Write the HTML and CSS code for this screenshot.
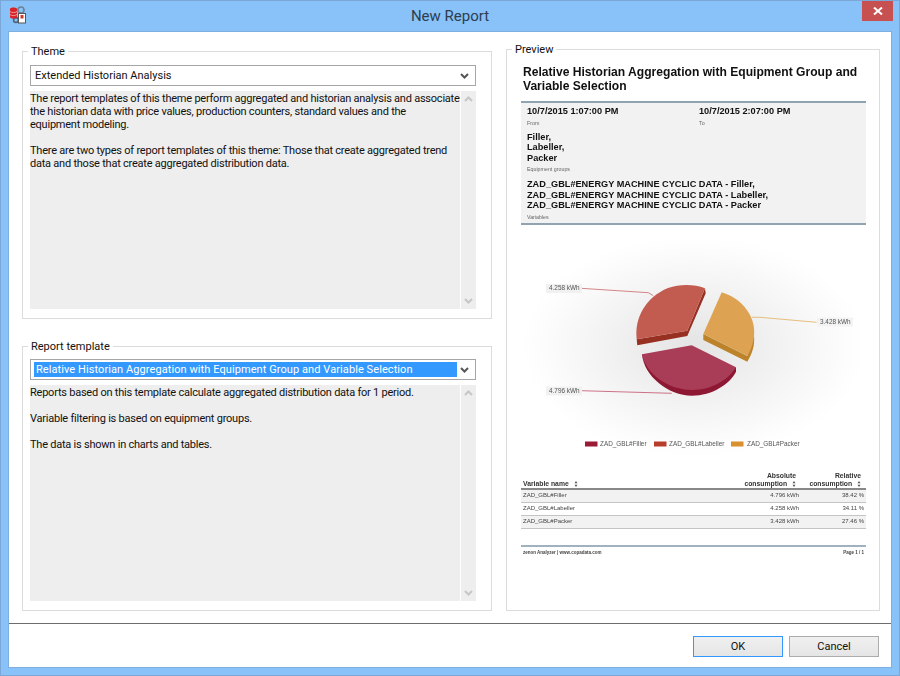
FILE: index.html
```html
<!DOCTYPE html>
<html lang="en">
<head>
<meta charset="UTF-8" />
<title>New Report</title>
<link rel="stylesheet" href="styles.css">
</head>
<body>

<svg class="defs" width="0" height="0">
  <symbol id="sort" viewBox="0 0 5 8">
    <path d="M2.5 0 L4.5 3 H0.5 Z M0.5 5 H4.5 L2.5 8 Z" fill="#555" />
  </symbol>
  <symbol id="chev-down" viewBox="0 0 9 6">
    <path d="M1 1 L4.5 4.5 L8 1" fill="none" stroke="currentColor" stroke-width="2" />
  </symbol>
  <symbol id="chev-up" viewBox="0 0 9 6">
    <path d="M1 5 L4.5 1.5 L8 5" fill="none" stroke="currentColor" stroke-width="2" />
  </symbol>
</svg>

<div class="window">
  <div class="titlebar">
    <svg class="app-icon" width="18" height="18" viewBox="0 0 18 18">
      <circle cx="12" cy="4" r="3" fill="none" stroke="#6d8294" stroke-width="1.6" />
      <circle cx="7" cy="14" r="2.4" fill="none" stroke="#4d6478" stroke-width="1.6" />
      <path d="M1 3 C1 1 8 1 8 3 V11 C8 13 1 13 1 11 Z" fill="#d8232a" />
      <path d="M1 5.5 C3 7 6 7 8 5.5 M1 8.5 C3 10 6 10 8 8.5" fill="none" stroke="#f6b0b0" stroke-width="0.8" />
      <rect x="9.5" y="7.5" width="7" height="9.5" fill="#fff" stroke="#555" />
      <rect x="11.5" y="9" width="3" height="3.5" fill="#d03a30" />
    </svg>
    <span class="title">New Report</span>
    <div class="close">
      <svg width="10" height="8" viewBox="0 0 10 8"><path d="M1 0.5 L9 7.5 M9 0.5 L1 7.5" stroke="#fff" stroke-width="2" /></svg>
    </div>
  </div>

  <div class="client">
    <div class="panes">
      <div class="left">
        <fieldset class="group theme-group">
          <legend>Theme</legend>
          <div class="combo">
            <span class="combo-text">Extended Historian Analysis</span>
            <svg class="combo-arrow"><use href="#chev-down" /></svg>
          </div>
          <div class="desc">
            <div class="desc-text">
              <p>The report templates of this theme perform aggregated and historian analysis and associate<br>the historian data with price values, production counters, standard values and the<br>equipment modeling.</p>
              <p>There are two types of report templates of this theme: Those that create aggregated trend<br>data and those that create aggregated distribution data.</p>
            </div>
            <div class="scrollbar">
              <svg><use href="#chev-up" /></svg>
              <svg><use href="#chev-down" /></svg>
            </div>
          </div>
        </fieldset>

        <fieldset class="group template-group">
          <legend>Report template</legend>
          <div class="combo">
            <span class="combo-text selected">Relative Historian Aggregation with Equipment Group and Variable Selection</span>
            <svg class="combo-arrow"><use href="#chev-down" /></svg>
          </div>
          <div class="desc">
            <div class="desc-text">
              <p>Reports based on this template calculate aggregated distribution data for 1 period.</p>
              <p>Variable filtering is based on equipment groups.</p>
              <p>The data is shown in charts and tables.</p>
            </div>
            <div class="scrollbar">
              <svg><use href="#chev-up" /></svg>
              <svg><use href="#chev-down" /></svg>
            </div>
          </div>
        </fieldset>
      </div>

      <fieldset class="group preview-group">
        <legend>Preview</legend>
        <div class="report">
          <h1>Relative Historian Aggregation with Equipment Group and Variable Selection</h1>

          <div class="meta">
            <div class="meta-row">
              <div class="meta-col">
                <strong>10/7/2015 1:07:00 PM</strong>
                <small>From</small>
              </div>
              <div class="meta-col">
                <strong>10/7/2015 2:07:00 PM</strong>
                <small>To</small>
              </div>
            </div>
            <div class="meta-block">
              <strong>Filler,<br>Labeller,<br>Packer</strong>
              <small>Equipment groups</small>
            </div>
            <div class="meta-block">
              <strong>ZAD_GBL#ENERGY MACHINE CYCLIC DATA - Filler,<br>ZAD_GBL#ENERGY MACHINE CYCLIC DATA - Labeller,<br>ZAD_GBL#ENERGY MACHINE CYCLIC DATA - Packer</strong>
              <small>Variables</small>
            </div>
          </div>

          <svg class="chart" width="345" height="222" viewBox="521 240 345 222">
            <defs>
              <radialGradient id="glow" cx="50%" cy="48%" r="50%">
                <stop offset="0" stop-color="#e4e4e4" />
                <stop offset="0.5" stop-color="#f2f2f2" />
                <stop offset="0.9" stop-color="#fdfdfd" />
                <stop offset="1" stop-color="#fff" />
              </radialGradient>
            </defs>
            <rect x="521" y="240" width="345" height="222" fill="url(#glow)" />

            <!-- leader lines -->
            <path d="M581 288.3 L648.3 292.7 L653.3 295.7" fill="none" stroke="#c9686a" stroke-width="0.8" />
            <path d="M751.7 317.3 H760 L816.7 322.3" fill="none" stroke="#e2b060" stroke-width="0.8" />
            <path d="M581 390.7 L671.7 393.3" fill="none" stroke="#c2506c" stroke-width="0.8" />

            <!-- labeller -->
            <path d="M636.7 339.3 L637.3 345.3 L687.3 336 L705.7 293.3 L705 288.3 L687.3 330.7 Z" fill="#983022" />
            <path d="M636.7 339.3 C634 318 646 297 668 288 C680 284 694 284 705 288.3 L687.3 330.7 Z" fill="#c35c50" />
            <!-- packer -->
            <path d="M703.3 334 V340 L747.3 361.7 C752 354 755 346 754 335 L747.3 356 Z" fill="#bd832a" />
            <path d="M721.7 292.3 C740 298 752 312 754 328 C755 338 752 348 747.3 356 L703.3 334 Z" fill="#dda352" />
            <!-- filler -->
            <path d="M642 354.3 C644 376 668 395.7 692 395.7 C712 395.7 730 384 736 371.7 V367.3 L692 380 Z" fill="#8e1733" />
            <path d="M691.7 345.3 L642 354.3 C646 374 668 390 692 390 C712 390 728 380 736 367.3 Z" fill="#a93c56" />

            <!-- value labels -->
            <rect x="546" y="284" width="36" height="9" fill="#f1f1f1" />
            <rect x="817" y="317.500" width="36" height="9" fill="#f3f3f3" />
            <rect x="546" y="386.500" width="36" height="9" fill="#f1f1f1" />
            <text class="chart-text" x="549" y="290.300">4.258 kWh</text>
            <text class="chart-text" x="820" y="324.300">3.428 kWh</text>
            <text class="chart-text" x="549" y="393">4.796 kWh</text>

            <!-- legend -->
            <rect x="585" y="441.500" width="12.500" height="5" fill="#9b1b36" />
            <text class="chart-text" x="600" y="446">ZAD_GBL#Filler</text>
            <rect x="654" y="441.500" width="12.500" height="5" fill="#b73d2c" />
            <text class="chart-text" x="669" y="446">ZAD_GBL#Labeller</text>
            <rect x="731" y="441.500" width="12.500" height="5" fill="#d9902f" />
            <text class="chart-text" x="747" y="446">ZAD_GBL#Packer</text>
          </svg>

          <table class="data">
            <thead>
              <tr>
                <th class="name-col">Variable name <svg class="sort"><use href="#sort" /></svg></th>
                <th>Absolute<br>consumption <svg class="sort"><use href="#sort" /></svg></th>
                <th>Relative<br>consumption <svg class="sort"><use href="#sort" /></svg></th>
              </tr>
            </thead>
            <tbody>
              <tr><td class="name-col">ZAD_GBL#Filler</td><td class="abs-col">4.796 kWh</td><td>38.42 %</td></tr>
              <tr><td class="name-col">ZAD_GBL#Labeller</td><td class="abs-col">4.258 kWh</td><td>34.11 %</td></tr>
              <tr><td class="name-col">ZAD_GBL#Packer</td><td class="abs-col">3.428 kWh</td><td>27.46 %</td></tr>
            </tbody>
          </table>

          <div class="report-footer">
            <span>zenon Analyzer | www.copadata.com</span>
            <span>Page 1 / 1</span>
          </div>
        </div>
      </fieldset>
    </div>

    <div class="buttons">
      <button class="btn btn-default">OK</button>
      <button class="btn">Cancel</button>
    </div>
  </div>
</div>

</body>
</html>
```

FILE: styles.css
```css
* {
  box-sizing: border-box;
}
html,
body {
  margin: 0;
  height: 100%;
}
body {
  font-family: Roboto, sans-serif;
  font-size: 11px;
  color: #111;
  overflow: hidden;
}
.defs {
  position: absolute;
}
.window {
  width: 900px;
  height: 676px;
  display: flex;
  flex-direction: column;
  background-color: #88c2f8;
  border: 1px solid #7aa7d6;
  padding: 0 7px 7px;
}
.titlebar {
  height: 30px;
  flex: none;
  display: flex;
  align-items: center;
  justify-content: center;
}
.app-icon {
  position: absolute;
  left: 9px;
  top: 6px;
}
.title {
  font-size: 15px;
  color: #2c3e50;
}
.close {
  position: absolute;
  left: 862px;
  top: 1px;
  width: 31px;
  height: 20px;
  background-color: #c75050;
  display: flex;
  align-items: center;
  justify-content: center;
}
.client {
  flex: 1;
  display: flex;
  flex-direction: column;
  background-color: #fff;
  border: 1px solid #7fafdf;
}
.panes {
  height: 592px;
  flex: none;
  display: flex;
  gap: 14px;
  padding: 11px 12px 0 13px;
  border-bottom: 1px solid #6d6d6d;
}
.left {
  width: 470px;
  flex: none;
  display: flex;
  flex-direction: column;
  height: 568px;
  gap: 19px;
}
.group {
  margin: 0;
  border: 1px solid #dcdcdc;
  padding: 6px 15px 9px 7px;
  min-width: 0;
}
.group legend {
  margin-left: -2px;
  padding: 0 3px;
  line-height: 18px;
  height: 16px;
}
.theme-group {
  height: 276px;
}
.template-group {
  height: 274px;
  padding-top: 5px;
}
.combo {
  height: 21px;
  border: 1px solid #a6a6a6;
  display: flex;
  align-items: center;
  justify-content: space-between;
  padding: 0 6px 0 3px;
}
.combo-text {
  padding: 0 0 0 1px;
  line-height: 15px;
}
.combo-text.selected {
  width: 423px;
  background-color: #3399ff;
  color: #fff;
  padding-left: 2px;
  letter-spacing: 0.08px;
}
.combo-arrow {
  width: 9px;
  height: 6px;
  color: #555;
}
.desc {
  margin-top: 5px;
  display: flex;
  gap: 1px;
}
.theme-group .desc {
  height: 218px;
}
.template-group .desc {
  height: 216px;
}
.desc-text {
  flex: 1;
  min-width: 0;
  background-color: #eee;
  padding-top: 1px;
  line-height: 13px;
  letter-spacing: -0.23px;
  white-space: nowrap;
}
.desc-text p {
  margin: 0 0 13px;
}
.scrollbar {
  width: 15px;
  flex: none;
  background-color: #eee;
  color: #c6c6c6;
  display: flex;
  flex-direction: column;
  justify-content: space-between;
  align-items: center;
  padding: 5px 0;
}
.scrollbar svg {
  width: 9px;
  height: 6px;
}
.preview-group {
  width: 374px;
  flex: none;
  height: 570px;
  margin-top: -2px;
  padding: 0 13px 0 14px;
}
.preview-group legend {
  margin-left: -9px;
}
.report {
  width: 345px;
  font-family: "Liberation Sans", Arial, sans-serif;
  color: #222;
  filter: blur(0.3px);
}
.report h1 {
  margin: 0;
  padding: 8px 2px 0;
  font-size: 12.100px;
  line-height: 14px;
  font-weight: bold;
  color: #111;
}
.meta {
  margin-top: 8px;
  height: 124px;
  background-color: #f2f2f2;
  border-top: 2px solid #8fa3b1;
  border-bottom: 2px solid #8fa3b1;
  padding: 3px 6px;
}
.meta strong {
  display: block;
  font-size: 9.200px;
  line-height: 10.500px;
  color: #111;
}
.meta small {
  display: block;
  margin-top: 3px;
  font-size: 5.300px;
  line-height: 6px;
  color: #666;
}
.meta-row {
  display: flex;
}
.meta-col {
  flex: none;
  width: 172px;
}
.meta-block {
  margin-top: 6px;
}
.meta-block + .meta-block {
  margin-top: 7px;
}
.chart {
  display: block;
  margin-top: 15px;
}
.chart-text {
  font-size: 6.400px;
  fill: #555;
}
.data {
  width: 345px;
  margin-top: 10px;
  border-collapse: collapse;
  font-size: 6px;
  table-layout: fixed;
}
.data th {
  font-size: 6.800px;
  line-height: 8px;
  padding: 0 5px 0 2px;
  text-align: right;
  vertical-align: bottom;
  border-bottom: 2px solid #888;
  color: #333;
}
.data th.name-col {
  width: 221px;
  text-align: left;
}
.data th:nth-child(2) {
  width: 62px;
  padding-right: 8px;
}
.data td {
  height: 13px;
  padding: 0 2px 2px;
  text-align: right;
  color: #444;
  border-bottom: 1px solid #c4c4c4;
}
.data td.name-col {
  text-align: left;
}
.data td.abs-col {
  padding-right: 5px;
}
.data tbody tr:nth-child(odd) td {
  background-color: #f2f2f2;
}
.sort {
  width: 4px;
  height: 6px;
  margin-left: 3px;
  vertical-align: middle;
}
.report-footer {
  margin-top: 16px;
  border-top: 2px solid #9fb2bd;
  padding: 3px 2px 0;
  display: flex;
  justify-content: space-between;
  font-size: 4.500px;
  font-weight: bold;
  color: #444;
}
.buttons {
  flex: 1;
  display: flex;
  justify-content: flex-end;
  gap: 6px;
  padding: 12px 12px 0 0;
}
.btn {
  width: 90px;
  height: 21px;
  padding: 0;
  font-family: Roboto, sans-serif;
  font-size: 11px;
  color: #111;
  border: 1px solid #acacac;
  background: linear-gradient(#f0f0f0, #e5e5e5);
}
.btn-default {
  border-color: #3399ff;
}
```
